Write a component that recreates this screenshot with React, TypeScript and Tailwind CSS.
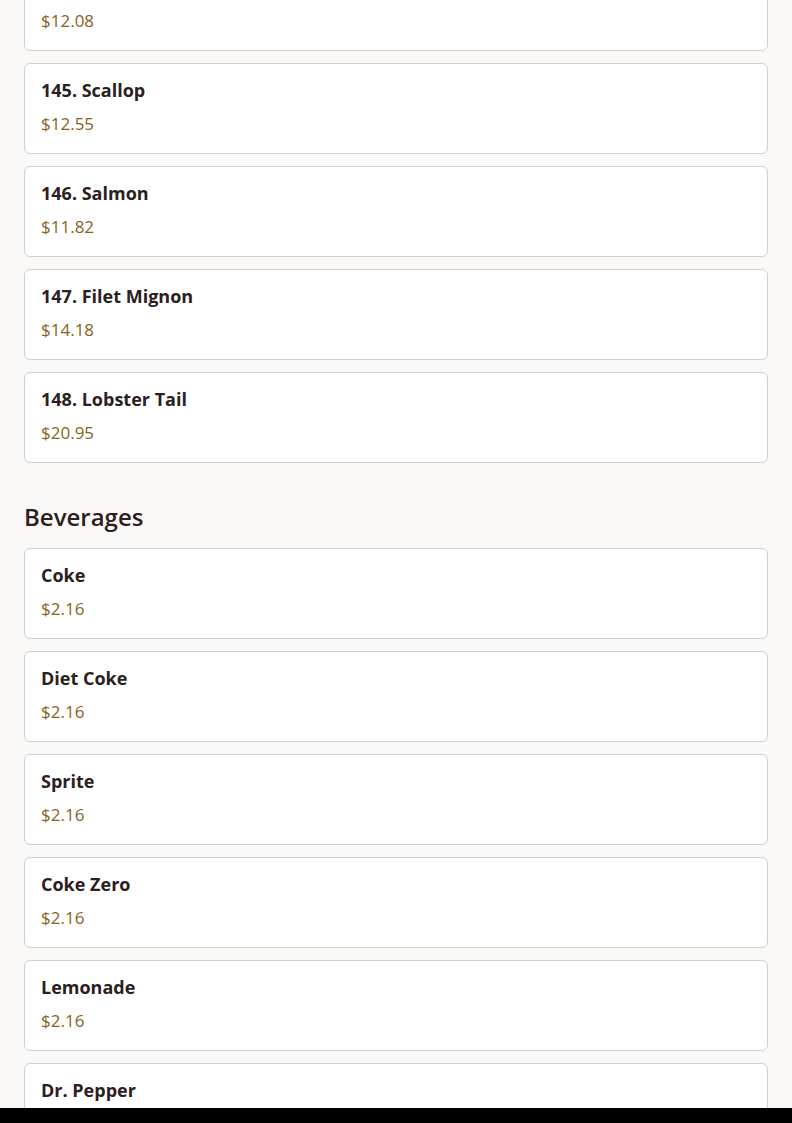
import React from "react";

type Item = { name: string; price: string };

const seafood: Item[] = [
  { name: "144. Shrimp", price: "$12.08" },
  { name: "145. Scallop", price: "$12.55" },
  { name: "146. Salmon", price: "$11.82" },
  { name: "147. Filet Mignon", price: "$14.18" },
  { name: "148. Lobster Tail", price: "$20.95" },
];

const beverages: Item[] = [
  { name: "Coke", price: "$2.16" },
  { name: "Diet Coke", price: "$2.16" },
  { name: "Sprite", price: "$2.16" },
  { name: "Coke Zero", price: "$2.16" },
  { name: "Lemonade", price: "$2.16" },
  { name: "Dr. Pepper", price: "$2.16" },
];

function Card({ item }: { item: Item }) {
  return (
    <div className="rounded-md border border-[#d3cfcb] bg-white px-4 pt-[14px] pb-[17px]">
      <div className="text-[18px] font-bold leading-[24px] text-[#2b201d]">{item.name}</div>
      <div className="mt-[10px] text-[17px] leading-[24px] text-[#85641c]">{item.price}</div>
    </div>
  );
}

export default function App() {
  return (
    <div
      className="flex h-[1123px] flex-col overflow-hidden bg-black"
      style={{ fontFamily: '"Open Sans", "Noto Sans", sans-serif' }}
    >
      <div className="h-[1108px] overflow-hidden bg-[#faf9f7]">
        <div className="mt-[-40px] px-6">
          <div className="flex flex-col gap-3">
            {seafood.map((it) => (
              <Card key={it.name} item={it} />
            ))}
          </div>
          <h2 className="mt-[38px] mb-[15px] text-[24px] font-semibold leading-[32px] text-[#2b201d]">Beverages</h2>
          <div className="flex flex-col gap-3">
            {beverages.map((it) => (
              <Card key={it.name} item={it} />
            ))}
          </div>
        </div>
      </div>
    </div>
  );
}
